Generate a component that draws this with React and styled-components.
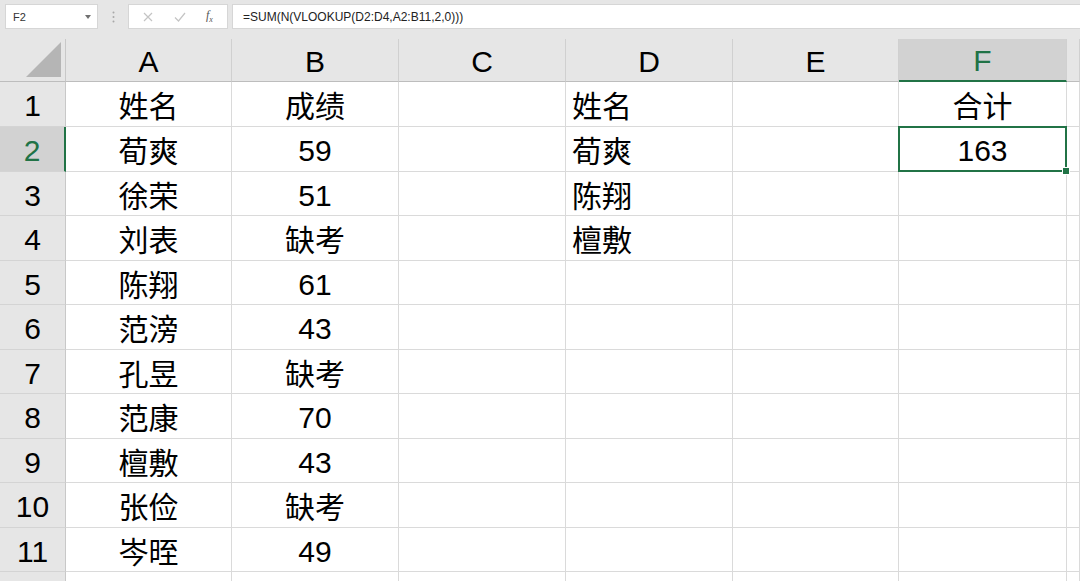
import React from 'react';
import styled, { createGlobalStyle, css } from 'styled-components';

const GlobalStyle = createGlobalStyle`
  html, body {
    margin: 0;
    padding: 0;
    background: #fff;
    overflow: hidden;
  }
`;

const FONT = `"Liberation Sans", "Noto Sans CJK SC", sans-serif`;

const Main = styled.main`
  width: 1080px;
  height: 581px;
  overflow: hidden;
  background: #fff;
  font-family: ${FONT};
  color: #000;
`;

const Toolbar = styled.div`
  height: 39px;
  background: #e6e6e6;
  display: flex;
  align-items: flex-start;
  padding: 4px 0 0 5px;
  box-sizing: border-box;
`;

const NameBox = styled.div`
  width: 93px;
  height: 25px;
  box-sizing: border-box;
  background: #fff;
  border: 1px solid #d6d6d6;
  display: flex;
  align-items: center;
  justify-content: space-between;
  padding: 0 6px 0 7px;
  font-size: 11px;
  color: #333;
`;

const Caret = styled.span`
  width: 0;
  height: 0;
  border-left: 3.5px solid transparent;
  border-right: 3.5px solid transparent;
  border-top: 4px solid #707070;
`;

const Grip = styled.div`
  width: 30px;
  height: 25px;
  display: flex;
  align-items: center;
  justify-content: center;
  svg {
    display: block;
  }
`;

const ButtonBox = styled.div`
  width: 100px;
  height: 25px;
  box-sizing: border-box;
  background: #fff;
  border: 1px solid #d6d6d6;
  display: flex;
  align-items: center;
  justify-content: space-around;
  padding: 0 4px;
`;

const Fx = styled.span`
  font-family: "Liberation Serif", serif;
  font-style: italic;
  font-size: 12px;
  color: #555;
  sub {
    font-size: 8px;
  }
`;

const FormulaInput = styled.div`
  flex: 1;
  height: 25px;
  margin-left: 4px;
  box-sizing: border-box;
  background: #fff;
  border: 1px solid #d6d6d6;
  border-right: none;
  display: flex;
  align-items: center;
  padding-left: 10px;
  font-size: 12px;
  color: #222;
`;

const widths = [66, 166, 167, 167, 167, 166, 168, 13];
const heights = [45, 45, 44, 45, 44, 45, 44, 45, 44, 45, 44, 20];

const Sheet = styled.div`
  display: grid;
  grid-template-columns: ${widths.map((w) => `${w}px`).join(' ')};
  grid-template-rows: 43px ${heights.map((h) => `${h}px`).join(' ')};
`;

const Corner = styled.div`
  background: #e6e6e6;
  border-right: 1px solid #c8c8c8;
  border-bottom: 1px solid #bdbdbd;
  box-sizing: border-box;
  display: flex;
  align-items: flex-end;
  justify-content: flex-end;
  padding: 0 4px 4px 0;
  svg {
    display: block;
  }
`;

const ColHead = styled.div`
  background: ${(p) => (p.$active ? '#d2d2d2' : '#e6e6e6')};
  color: ${(p) => (p.$active ? '#217346' : '#000')};
  border-right: 1px solid #d0d0d0;
  border-bottom: ${(p) => (p.$active ? '2px solid #217346' : '1px solid #bdbdbd')};
  box-sizing: border-box;
  display: flex;
  align-items: center;
  justify-content: center;
  font-size: 30px;
  padding-top: 3px;
`;

const RowHead = styled.div`
  background: ${(p) => (p.$active ? '#d2d2d2' : '#e6e6e6')};
  color: ${(p) => (p.$active ? '#217346' : '#000')};
  border-right: ${(p) => (p.$active ? '2px solid #217346' : '1px solid #c8c8c8')};
  border-bottom: 1px solid #d4d4d4;
  box-sizing: border-box;
  display: flex;
  align-items: center;
  justify-content: center;
  font-size: 30px;
  padding-top: 4px;
`;

const Cell = styled.div`
  position: relative;
  border-right: 1px solid #dadada;
  border-bottom: 1px solid #dadada;
  box-sizing: border-box;
  display: flex;
  align-items: center;
  justify-content: ${(p) => (p.$align === 'left' ? 'flex-start' : 'center')};
  padding-left: ${(p) => (p.$align === 'left' ? '6px' : '0')};
  padding-top: ${(p) => (p.$num ? '4px' : '0')};
  font-size: 30px;
  white-space: nowrap;
  ${(p) =>
    p.$selected &&
    css`
      &::after {
        content: '';
        position: absolute;
        left: -1px;
        top: -1px;
        right: -1px;
        bottom: -1px;
        border: 2px solid #217346;
      }
      &::before {
        content: '';
        position: absolute;
        right: -4px;
        bottom: -4px;
        width: 6px;
        height: 6px;
        background: #217346;
        border: 1px solid #fff;
        z-index: 1;
      }
    `}
`;

const columns = ['A', 'B', 'C', 'D', 'E', 'F'];

const data = [
  ['姓名', '成绩', '', '姓名', '', '合计'],
  ['荀爽', '59', '', '荀爽', '', '163'],
  ['徐荣', '51', '', '陈翔', '', ''],
  ['刘表', '缺考', '', '檀敷', '', ''],
  ['陈翔', '61', '', '', '', ''],
  ['范滂', '43', '', '', '', ''],
  ['孔昱', '缺考', '', '', '', ''],
  ['范康', '70', '', '', '', ''],
  ['檀敷', '43', '', '', '', ''],
  ['张俭', '缺考', '', '', '', ''],
  ['岑晊', '49', '', '', '', ''],
  ['', '', '', '', '', ''],
];

export default function App() {
  return (
    <Main>
      <GlobalStyle />
      <Toolbar>
        <NameBox>
          <span>F2</span>
          <Caret />
        </NameBox>
        <Grip>
          <svg width="3" height="12" viewBox="0 0 3 12">
            <circle cx="1.5" cy="1.5" r="1" fill="#a8a8a8" />
            <circle cx="1.5" cy="6" r="1" fill="#a8a8a8" />
            <circle cx="1.5" cy="10.5" r="1" fill="#a8a8a8" />
          </svg>
        </Grip>
        <ButtonBox>
          <svg width="10" height="10" viewBox="0 0 10 10">
            <path d="M1 1L9 9M9 1L1 9" stroke="#c4c4c4" strokeWidth="1.2" />
          </svg>
          <svg width="12" height="10" viewBox="0 0 12 10">
            <path d="M1 5.5L4.5 9L11 1" stroke="#c4c4c4" strokeWidth="1.2" fill="none" />
          </svg>
          <Fx>
            f<sub>x</sub>
          </Fx>
        </ButtonBox>
        <FormulaInput>=SUM(N(VLOOKUP(D2:D4,A2:B11,2,0)))</FormulaInput>
      </Toolbar>

      <Sheet>
        <Corner>
          <svg width="35" height="35" viewBox="0 0 35 35">
            <polygon points="35,0 35,35 0,35" fill="#b5b5b5" />
          </svg>
        </Corner>
        {columns.map((c) => (
          <ColHead key={c} $active={c === 'F'}>
            {c}
          </ColHead>
        ))}
        <ColHead />

        {data.map((row, r) => (
          <React.Fragment key={r}>
            <RowHead $active={r === 1}>{r < 11 ? r + 1 : ''}</RowHead>
            {row.map((v, c) => (
              <Cell
                key={c}
                $align={c === 3 ? 'left' : 'center'}
                $num={/^\d+$/.test(v)}
                $selected={r === 1 && c === 5}
              >
                {v}
              </Cell>
            ))}
            <Cell />
          </React.Fragment>
        ))}
      </Sheet>
    </Main>
  );
}
